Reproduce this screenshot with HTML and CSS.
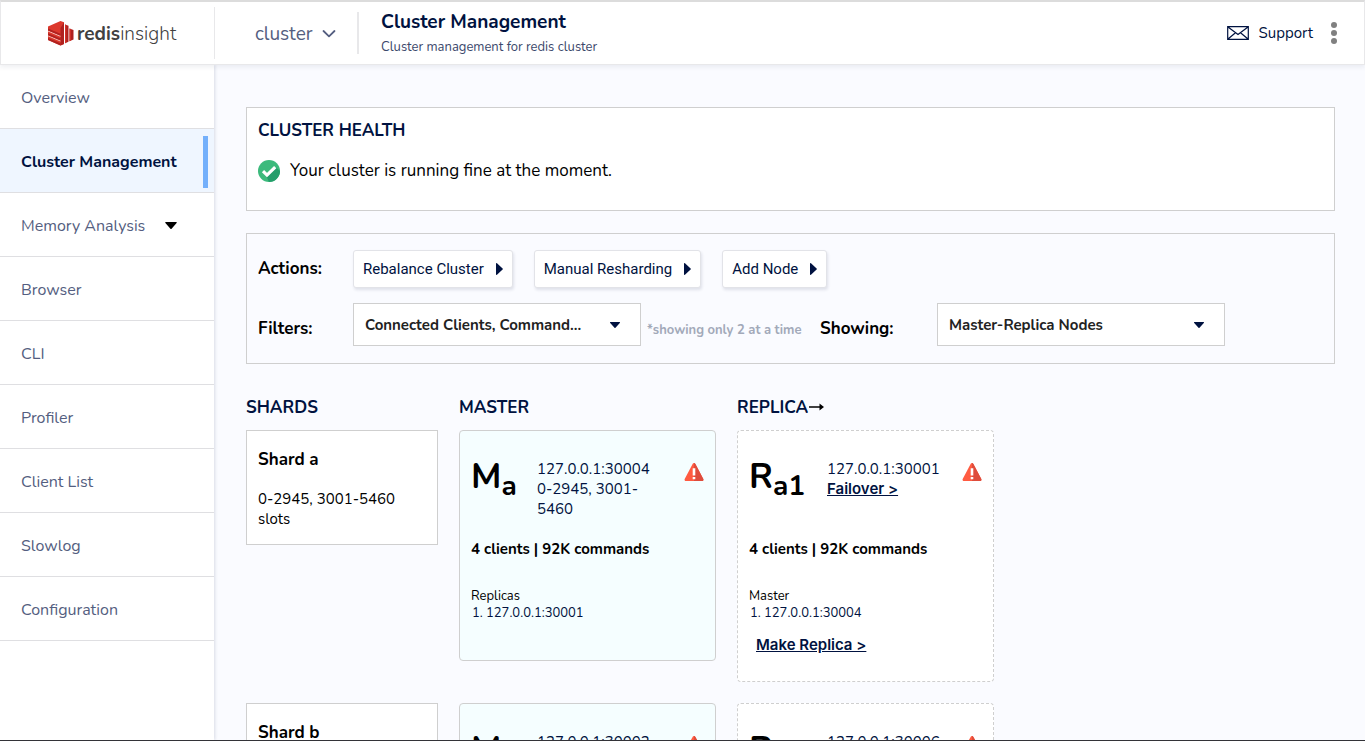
FILE: index.html
```html
<!DOCTYPE html>
<html lang="en">
<head>
<meta charset="utf-8">
<title>Cluster Management - RedisInsight</title>
<link rel="stylesheet" href="styles.css">
</head>
<body>
<svg class="defs" aria-hidden="true">
  <symbol id="warning" viewBox="0 0 20 18">
    <path d="M8.6.9a1.6 1.6 0 0 1 2.8 0l7.9 15c.5 1-.2 2.1-1.3 2.1H2c-1.100 0-1.800-1.100-1.300-2.100z" fill="#ff5b41"/>
    <path d="M10 0c.6 0 1.100.3 1.400.9l7.900 15c.5 1-.2 2.100-1.300 2.100h-8z" fill="#de4c3c"/>
    <path d="M8.700 5.200h2.600v7.400H8.700zM8.700 14h2.600v2.200H8.700z" fill="#fff"/>
  </symbol>
  <symbol id="caret-down" viewBox="0 0 10 6"><path d="M.6 0h8.800c.6 0 .8.500.4.900L5.500 5.700c-.3.300-.7.300-1 0L.2.900C-.2.500 0 0 .6 0z" fill="currentColor"/></symbol>
  <symbol id="caret-right" viewBox="0 0 7 12"><path d="M0 .7C0 .1.600-.2 1 .2l5.600 5.200c.4.300.4.900 0 1.200L1 11.800c-.4.400-1 .1-1-.5z" fill="currentColor"/></symbol>
</svg>
<header class="topbar">
  <a class="logo" href="#">
    <svg width="26" height="25" viewBox="0 0 26 25" aria-hidden="true">
      <path d="M0 5.500 12.500 0l3.500 1.300V23l-3.500 1.500L0 19z" fill="#dc382c"/>
      <path d="M12.500 7 16 1.300V23l-3.500 1.500zM17 3.500l3.500 1.300v16L17 22.300zM21.500 7.500 25.500 9v9.500l-4 1.800z" fill="#b0211f"/>
      <path d="M17 3.500 18.300 4v17.700l-1.300.6zM21.500 7.500l1.300.5v11.700l-1.300.6z" fill="#d63329"/>
      <path d="M0 9.500 12.500 14.700v1L0 10.500zM0 14.300l12.500 5.200v1L0 15.300z" fill="#f6c9c5"/>
      <path d="M0 7.500 12.500 12.700v2L0 9.500zM0 12.300l12.500 5.200v2L0 14.300zM0 17l12.500 5.200v2.300L0 19z" fill="#b0211f"/>
    </svg>
    <span class="logo-text"><b>redis</b>insight</span>
  </a>
  <button class="cluster-switch" type="button">cluster
    <svg width="14" height="8" viewBox="0 0 14 8" aria-hidden="true"><path d="M1.500 1 7 6.300 12.500 1" fill="none" stroke="currentColor" stroke-width="1.800" stroke-linecap="round" stroke-linejoin="round"/></svg>
  </button>
  <div class="heading">
    <h1>Cluster Management</h1>
    <p>Cluster management for redis cluster</p>
  </div>
  <a class="support" href="#">
    <svg width="22" height="14" viewBox="0 0 22 14" aria-hidden="true"><path d="M.7.700h20.600v12.600H.7zM1 1l10 7.500L21 1M1 13l7.500-6.300M21 13l-7.500-6.300" fill="none" stroke="currentColor" stroke-width="1.200"/></svg>
    Support
  </a>
  <button class="more" type="button" aria-label="More options">
    <svg width="6" height="22" viewBox="0 0 6 22" aria-hidden="true"><circle cx="3" cy="3" r="3"/><circle cx="3" cy="11" r="3"/><circle cx="3" cy="19" r="3"/></svg>
  </button>
</header>
<div class="shell">
  <nav class="sidebar">
    <a href="#">Overview</a>
    <a class="active" href="#" aria-current="page">Cluster Management</a>
    <a href="#">Memory Analysis <svg class="nav-caret" width="12" height="7" aria-hidden="true"><use href="#caret-down"/></svg></a>
    <a href="#">Browser</a>
    <a href="#">CLI</a>
    <a href="#">Profiler</a>
    <a href="#">Client List</a>
    <a href="#">Slowlog</a>
    <a href="#">Configuration</a>
  </nav>
  <main class="content">
    <section class="health">
      <h2>CLUSTER HEALTH</h2>
      <p class="status">
        <svg width="22" height="22" viewBox="0 0 22 22" aria-hidden="true"><circle cx="11" cy="11" r="11" fill="#3cba7c"/><path d="m18 7.500 4 3.500a11 11 0 0 1-11 11l-2.500-5.500z" fill="#249e6b"/><path d="m5 11.200 4 3.900 8.200-8" fill="none" stroke="#fff" stroke-width="3.200"/></svg>
        Your cluster is running fine at the moment.
      </p>
    </section>
    <section class="controls">
      <div class="control-row">
        <span class="label">Actions:</span>
        <div class="actions">
          <button type="button">Rebalance Cluster <svg width="7" height="12" aria-hidden="true"><use href="#caret-right"/></svg></button>
          <button type="button">Manual Resharding <svg width="7" height="12" aria-hidden="true"><use href="#caret-right"/></svg></button>
          <button type="button">Add Node <svg width="7" height="12" aria-hidden="true"><use href="#caret-right"/></svg></button>
        </div>
      </div>
      <div class="control-row filters">
        <label class="label" for="filters">Filters:</label>
        <div class="select">
          <select id="filters"><option>Connected Clients, Command...</option></select>
          <svg width="10" height="6" aria-hidden="true"><use href="#caret-down"/></svg>
        </div>
        <span class="hint">*showing only 2 at a time</span>
        <label class="label showing" for="showing">Showing:</label>
        <div class="select">
          <select id="showing"><option>Master-Replica Nodes</option></select>
          <svg width="10" height="6" aria-hidden="true"><use href="#caret-down"/></svg>
        </div>
      </div>
    </section>
    <section class="nodes">
      <h2>SHARDS</h2>
      <h2>MASTER</h2>
      <h2>REPLICA<svg class="arrow" width="15" height="8" viewBox="0 0 15 8" aria-hidden="true"><path d="M0 4h12" stroke="currentColor" stroke-width="1.500"/><path d="m10.500.500 4.500 3.500-4.500 3.500z" fill="currentColor"/></svg></h2>

      <article class="shard"><h3>Shard a</h3><p>0-2945, 3001-5460 slots</p></article>
      <article class="node master">
        <div class="node-head">
          <span class="node-id">M<span class="sub">a</span></span>
          <div class="address">127.0.0.1:30004<br>0-2945, 3001-5460</div>
          <svg width="20" height="18" role="img" aria-label="Warning"><use href="#warning"/></svg>
        </div>
        <p class="stats">4 clients | 92K commands</p>
        <p class="peers">Replicas</p>
        <ol><li>127.0.0.1:30001</li></ol>
      </article>
      <article class="node replica">
        <div class="node-head">
          <span class="node-id">R<span class="sub">a1</span></span>
          <div class="address">127.0.0.1:30001<br><a href="#">Failover &gt;</a></div>
          <svg width="20" height="18" role="img" aria-label="Warning"><use href="#warning"/></svg>
        </div>
        <p class="stats">4 clients | 92K commands</p>
        <p class="peers">Master</p>
        <ol><li>127.0.0.1:30004</li></ol>
        <a class="make-replica" href="#">Make Replica &gt;</a>
      </article>

      <article class="shard"><h3>Shard b</h3></article>
      <article class="node master">
        <div class="node-head">
          <span class="node-id">M</span>
          <div class="address">127.0.0.1:30002</div>
          <svg width="20" height="18" role="img" aria-label="Warning"><use href="#warning"/></svg>
        </div>
      </article>
      <article class="node replica">
        <div class="node-head">
          <span class="node-id">R</span>
          <div class="address">127.0.0.1:30006</div>
          <svg width="20" height="18" role="img" aria-label="Warning"><use href="#warning"/></svg>
        </div>
      </article>
    </section>
  </main>
</div>
</body>
</html>
```

FILE: styles.css
```css
:root {
  --navy: #001240;
  --muted: #545e80;
  --line: #cfcfcf;
  --rounded: Nunito, Lato, "Noto Sans", sans-serif;
  --ui: Inter, "Liberation Sans", sans-serif;
}

* { box-sizing: border-box; }

body {
  display: flex;
  flex-direction: column;
  height: 100vh;
  margin: 0;
  overflow: hidden;
  border-bottom: 1px solid #333338;
  background: #fafbff;
  color: #000;
  font: 16px/20px var(--rounded);
}

h1, h2, h3, p, ol { margin: 0; }
a { color: inherit; text-decoration: none; }
button { font: inherit; color: inherit; cursor: pointer; }
svg { flex: none; }
.defs { position: absolute; width: 0; height: 0; }

.topbar {
  position: relative;
  display: flex;
  flex: none;
  align-items: center;
  height: 65px;
  border: 1px solid #e8e8ea;
  border-top: 2px solid #dcdcdc;
  background: #fff;
  box-shadow: 0 2px 5px rgba(30, 40, 80, 0.08);
}

.logo {
  display: flex;
  align-items: center;
  gap: 3px;
  width: 214px;
  height: 52px;
  padding-left: 47px;
  border-right: 1px solid #e8e8ea;
}
.logo-text { padding-top: 1px; color: #414141; font-size: 19px; font-weight: 300; line-height: 24px; }
.logo-text b { font-weight: 700; }

.cluster-switch {
  display: flex;
  align-items: center;
  gap: 9px;
  width: 144px;
  height: 42px;
  padding: 1px 0 0 40px;
  border: 0;
  border-right: 2px solid #e8e8ea;
  background: none;
  color: var(--muted);
  font-size: 19px;
}

.heading { flex: 1; padding: 1px 0 0 22px; color: var(--navy); }
.heading h1 { font-size: 19px; line-height: 24px; }
.heading p { margin-top: 3px; color: #3b486c; font-size: 13px; }

.support { display: flex; align-items: center; gap: 10px; color: var(--navy); font-size: 15px; }
.more { display: flex; margin: 0 27px 0 18px; padding: 0; border: 0; background: none; fill: #808080; }

.shell { display: flex; flex: 1; min-height: 0; }

.sidebar {
  flex: none;
  width: 214px;
  background: #fff;
  box-shadow: 1px 0 3px rgba(30, 40, 80, 0.15);
}
.sidebar a {
  display: flex;
  align-items: center;
  height: 64px;
  padding: 2px 6px 0 21px;
  border-bottom: 1px solid #dfdfe2;
  color: var(--muted);
}
.sidebar .active {
  justify-content: space-between;
  background: #eff6ff;
  color: var(--navy);
  font-weight: 700;
}
.sidebar .active::after { width: 5px; height: 52px; background: #74b0fb; content: ""; }
.nav-caret { margin-left: 20px; color: #000; }

.content { flex: 1; overflow: auto; scrollbar-width: none; padding: 42px 30px 0 32px; }

h2 { color: var(--navy); font-size: 17px; line-height: 22px; font-weight: 700; }

.health { padding: 12px 11px 28px; border: 1px solid var(--line); background: #fff; }
.status { display: flex; align-items: center; gap: 10px; margin-top: 18px; font-size: 17px; line-height: 22px; }

.controls { margin-top: 22px; padding: 16px 11px 17px; border: 1px solid var(--line); }
.control-row { display: flex; align-items: center; }
.label { width: 95px; font-size: 17px; font-weight: 700; }
.actions { display: flex; gap: 21px; }
.actions button {
  display: flex;
  align-items: center;
  gap: 12px;
  height: 38px;
  padding: 0 9px;
  border: 1px solid #e2e3e8;
  border-radius: 3px;
  background: #fff;
  box-shadow: 1px 2px 3px rgba(30, 40, 80, 0.12);
  color: var(--navy);
  font: 15px/20px Roboto, var(--ui);
}
.filters { margin-top: 15px; }
.filters .label { padding-top: 8px; }
.select { display: grid; align-items: center; width: 288px; color: var(--navy); }
.select select {
  grid-area: 1 / 1;
  width: 100%;
  height: 43px;
  padding: 0 40px 0 11px;
  border: 1px solid var(--line);
  border-radius: 0;
  appearance: none;
  background: #fff;
  color: #222;
  font: 700 15px/20px var(--rounded);
}
.select svg { grid-area: 1 / 1; justify-self: end; margin-right: 21px; pointer-events: none; }
.hint { width: 179px; padding: 10px 0 0 6px; color: #a2a9b9; font-size: 13px; font-weight: 700; }
.filters .showing { width: 117px; }

.nodes {
  display: grid;
  grid-template-columns: 192px 257px 257px;
  align-items: start;
  gap: 21px;
  margin-top: 33px;
}
.nodes h2 { margin-bottom: -10px; }
.arrow { margin-left: 1px; color: #000; vertical-align: 2px; }

.shard { padding: 19px 11px 15px; border: 1px solid var(--line); background: #fff; }
.shard h3 { font-size: 17px; line-height: 20px; }
.shard p { margin-top: 19px; padding-right: 16px; font-size: 15px; }

.node { padding: 28px 11px 26px; border: 1px solid var(--line); border-radius: 4px; background: #fff; }
.master { min-height: 231px; background: #f5feff; }
.replica { min-height: 252px; border-style: dashed; }
.node-head { display: flex; align-items: flex-start; min-height: 60px; }
.node-id { flex: none; width: 66px; font-size: 35px; line-height: 36px; font-weight: 700; }
.replica .node-id { width: 78px; }
.sub { position: relative; top: 7px; font-size: 28px; }
.address { flex: none; width: 118px; color: var(--navy); font-size: 15px; }
.node-head svg { margin: 4px 0 0 auto; }
.address a, .make-replica { font: 600 15px/20px var(--ui); text-decoration: underline; }
.stats { margin-top: 20px; font-size: 15px; font-weight: 700; }
.peers { margin-top: 29px; font-size: 13px; line-height: 17px; }
.node ol { padding-left: 15px; color: var(--navy); font-size: 13px; line-height: 17px; }
.make-replica { display: block; width: fit-content; margin: 13px 0 0 7px; color: var(--navy); }
```
